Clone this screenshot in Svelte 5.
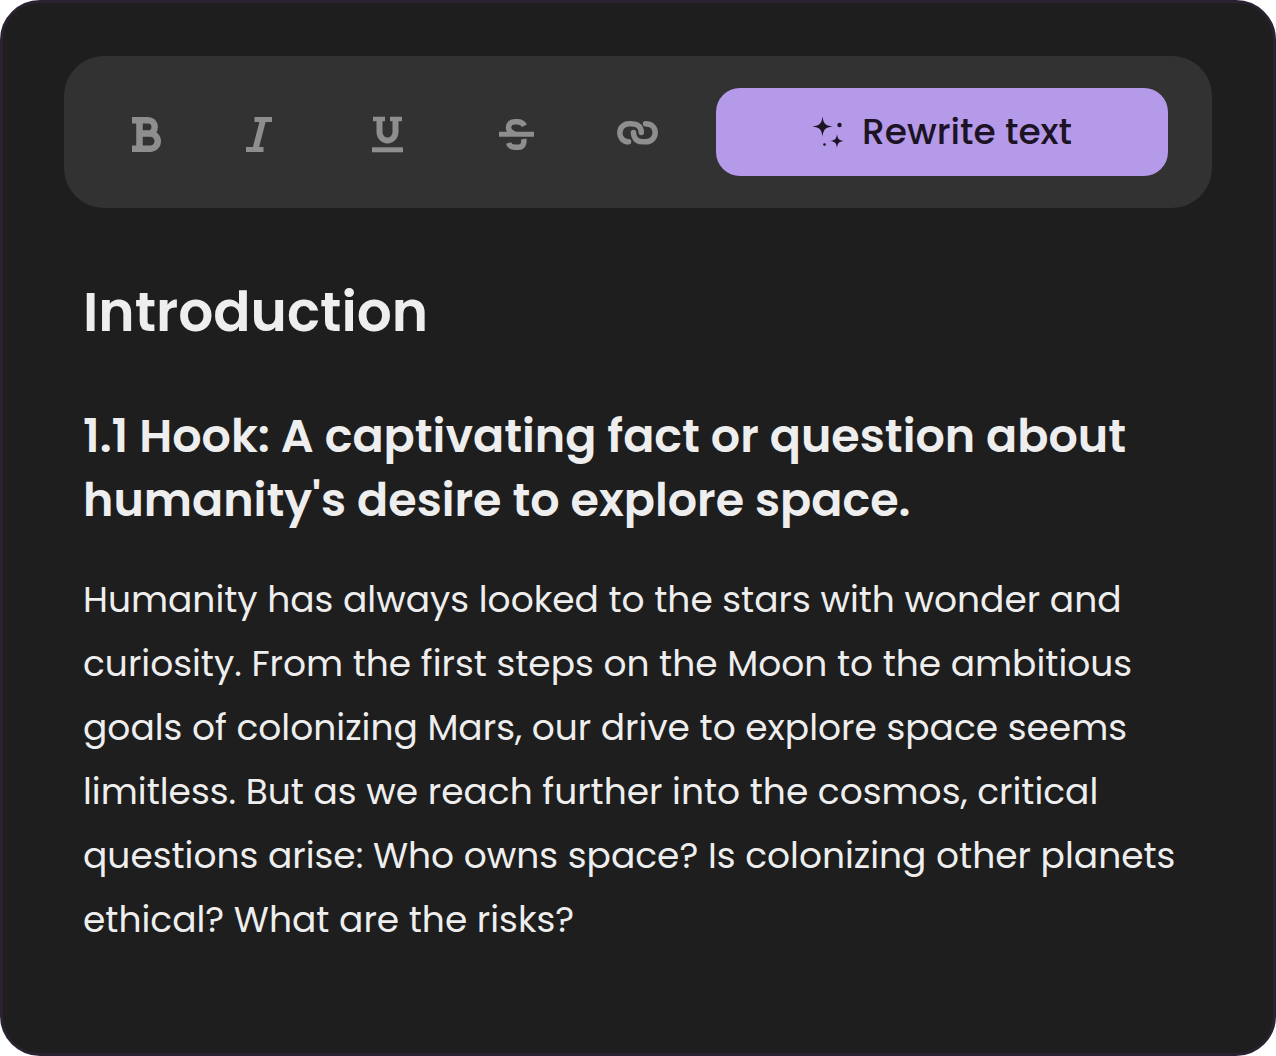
<script lang="ts">
  let active = $state<string | null>(null);

  function toggle(name: string) {
    active = active === name ? null : name;
  }
</script>

<main class="editor">
  <div class="toolbar" role="toolbar" aria-label="Text formatting">
    <div class="formats">
      <button type="button" aria-label="Bold" aria-pressed={active === 'bold'} onclick={() => toggle('bold')}>
        <svg viewBox="0 0 48 48" stroke-width="6.5">
          <path d="M10 12.2H26A6.700 6.700 0 0 1 26 25.600H17M26 25.600H28.200A7.500 7.500 0 0 1 28.200 40.700H10M17.500 12V41" />
        </svg>
      </button>
      <button type="button" aria-label="Italic" aria-pressed={active === 'italic'} onclick={() => toggle('italic')}>
        <svg viewBox="0 0 48 48" stroke-width="5">
          <path d="M9.500 11.500H27M1 41.500H18.500" />
          <path d="M18 12L10.500 41" stroke-width="6" />
        </svg>
      </button>
      <button type="button" aria-label="Underline" aria-pressed={active === 'underline'} onclick={() => toggle('underline')}>
        <svg viewBox="0 0 48 48" stroke-width="5">
          <path d="M5 11H17M22 11H34" stroke-width="4.5" />
          <path d="M11.500 11V24A8 8.500 0 0 0 27.500 24V11" stroke-width="6" />
          <path d="M4 41.800H35" />
        </svg>
      </button>
      <button type="button" aria-label="Strikethrough" aria-pressed={active === 'strike'} onclick={() => toggle('strike')}>
        <svg viewBox="0 0 48 48" stroke-width="5.5">
          <path d="M8 26.200H43" stroke-width="5" />
          <path d="M33.500 17.800C32 15 29.500 13.700 26.500 13.700H24C20 13.700 17.500 16 17.500 19.500C17.500 23 20 24.500 23.500 26M32.700 31C33.500 36 31.500 39.300 27.500 39.300H23.500C20.500 39.300 18.500 38 17.500 35" />
        </svg>
      </button>
      <button type="button" aria-label="Link" aria-pressed={active === 'link'} onclick={() => toggle('link')}>
        <svg viewBox="0 0 48 48" stroke-width="5.5" stroke-linecap="round">
          <path d="M14.500 33.800C9 33.800 5.800 29.500 5.800 25C5.800 19.500 10 15.700 15 15.700H17C21.500 15.700 25 17.200 26.500 20.500C27.200 22 27.300 23 27.300 24.500" />
          <path d="M31.500 15.700C37.500 15.700 41.200 19.500 41.200 24.500C41.200 30 37 33.800 32 33.800H29C24.500 33.800 21.500 32 20.200 28.500C19.700 27 19.500 26 19.500 24.500" />
        </svg>
      </button>
    </div>
    <button type="button" class="rewrite">
      <svg viewBox="0 0 32 32" aria-hidden="true">
        <path d="M10.500 0.500C11.500 7.500 13 9.500 20.500 10.500C13 11.500 11.500 13.500 10.500 20.500C9.500 13.500 8 11.500 0.500 10.500C8 9.500 9.500 7.500 10.500 0.500Z" />
        <path d="M25 18C25.700 23 26.500 24.300 32 25C26.500 25.700 25.700 27 25 32C24.300 27 23.500 25.700 18 25C23.500 24.300 24.300 23 25 18Z" />
        <circle cx="27.500" cy="9" r="2.200" />
        <circle cx="12.500" cy="28.500" r="1.300" />
      </svg>
      <span>Rewrite text</span>
    </button>
  </div>

  <article>
    <h1>Introduction</h1>
    <h2>1.1 Hook: A captivating fact or question about humanity's desire to explore space.</h2>
    <p>
      Humanity has always looked to the stars with wonder and curiosity. From the first steps on the Moon to the
      ambitious goals of colonizing Mars, our drive to explore space seems limitless. But as we reach further into the
      cosmos, critical questions arise: Who owns space? Is colonizing other planets ethical? What are the risks?
    </p>
  </article>
</main>

<style>
  :global(body) {
    margin: 0;
    background: #fff;
  }

  .editor {
    box-sizing: border-box;
    min-height: 100vh;
    padding: 53px 61px;
    border: 3px solid #2a2230;
    border-radius: 40px;
    background: #1e1e1e;
    color: #eee;
    font-family: Poppins, Inter, sans-serif;
  }

  .toolbar {
    display: grid;
    grid-template-columns: 540fr 452fr;
    gap: 54px;
    align-items: center;
    padding: 32px 44px 32px 58px;
    border-radius: 40px;
    background: #323232;
  }

  .formats {
    display: flex;
    justify-content: space-between;
  }

  button {
    padding: 0;
    border: 0;
    background: none;
    font: inherit;
    cursor: pointer;
  }

  .formats svg {
    display: block;
    width: 48px;
    height: 48px;
    fill: none;
    stroke: #8e8e8e;
  }

  .formats button[aria-pressed='true'] svg {
    stroke: #b49ae8;
  }

  .rewrite {
    display: flex;
    align-items: center;
    justify-content: center;
    gap: 18px;
    height: 88px;
    padding-bottom: 1px;
    border-radius: 24px;
    background: #b49ae8;
    color: #1c1324;
    font-size: 36px;
    font-weight: 500;
  }

  .rewrite svg {
    width: 32px;
    height: 32px;
    fill: currentColor;
  }

  article {
    padding: 64px 16px 0 19px;
  }

  h1 {
    margin: 0;
    font-size: 55px;
    font-weight: 600;
    line-height: 80px;
  }

  h2 {
    margin: 52px 0 0;
    font-size: 46px;
    font-weight: 600;
    line-height: 64px;
  }

  p {
    margin: 36px 0 0;
    font-size: 36px;
    line-height: 64px;
  }
</style>
